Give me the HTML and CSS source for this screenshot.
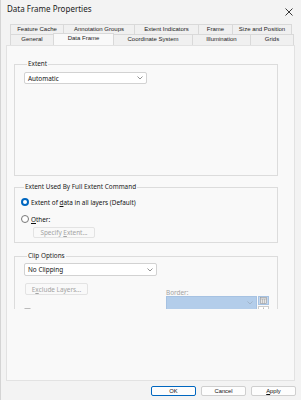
FILE: index.html
```html
<!DOCTYPE html>
<html lang="en">
<head>
  <meta charset="UTF-8" />
  <title>Data Frame Properties</title>
  <link rel="stylesheet" href="styles.css">
</head>
<body>
  <div class="window">
    <div class="titlebar">
      <span class="title">Data Frame Properties</span>
      <span class="close">
        <svg width="8" height="8" viewBox="0 0 8 8"><path d="M0.5 0.5 L7.5 7.5 M7.5 0.5 L0.5 7.5" stroke="#222" stroke-width="0.9" fill="none"/></svg>
      </span>
    </div>

    <div class="tabs">
      <div class="tab-row">
        <div class="tab" style="width:53px">Feature Cache</div>
        <div class="tab" style="width:71px">Annotation Groups</div>
        <div class="tab" style="width:64px">Extent Indicators</div>
        <div class="tab" style="width:34px">Frame</div>
        <div class="tab last" style="width:60px">Size and Position</div>
      </div>
      <div class="tab-row">
        <div class="tab" style="width:43px">General</div>
        <div class="tab active" style="width:61px">Data Frame</div>
        <div class="tab" style="width:79px">Coordinate System</div>
        <div class="tab" style="width:58px">Illumination</div>
        <div class="tab last" style="width:44px">Grids</div>
      </div>
    </div>

    <div class="panel">
      <div class="panel-body">
        <fieldset class="group group-extent">
          <legend>Extent</legend>
          <div class="combo combo-auto">
            <span>Automatic</span>
            <svg class="chev" width="6" height="4" viewBox="0 0 6 4"><path d="M0.5 0.5 L3 3 L5.5 0.5" stroke="#666" stroke-width="0.7" fill="none"/></svg>
          </div>
        </fieldset>

        <fieldset class="group group-full">
          <legend>Extent Used By Full Extent Command</legend>
          <div class="radio-row">
            <span class="radio checked"></span>
            <span>Extent of <u>d</u>ata in all layers (Default)</span>
          </div>
          <div class="radio-row">
            <span class="radio"></span>
            <span><u>O</u>ther:</span>
          </div>
          <div class="btn disabled btn-specify">Specify&nbsp;<u>E</u>xtent...</div>
        </fieldset>

        <fieldset class="group group-clip">
          <legend>Clip Options</legend>
          <div class="combo combo-clip">
            <span>No Clipping</span>
            <svg class="chev" width="6" height="4" viewBox="0 0 6 4"><path d="M0.5 0.5 L3 3 L5.5 0.5" stroke="#666" stroke-width="0.7" fill="none"/></svg>
          </div>
          <div class="clip-row">
            <div class="btn disabled btn-exclude">E<u>x</u>clude Layers...</div>
            <div class="border-field">
              <div class="border-label"><u>B</u>order:</div>
              <div class="border-inputs">
                <div class="combo combo-border">
                  <svg class="chev" width="6" height="4" viewBox="0 0 6 4"><path d="M0.5 0.5 L3 3 L5.5 0.5" stroke="#9ab" stroke-width="0.7" fill="none"/></svg>
                </div>
                <div class="side-btns">
                  <div class="side-btn">
                    <svg width="7" height="7" viewBox="0 0 7 7"><rect x="0.5" y="0.5" width="6" height="6" fill="#e6e6e6" stroke="#999" stroke-width="0.6"/><path d="M0.5 2 H6.5 M2.5 2 V6.5 M4.5 2 V6.5" stroke="#999" stroke-width="0.5"/></svg>
                  </div>
                  <div class="side-btn small">
                    <svg width="5" height="5" viewBox="0 0 5 5"><path d="M2.5 0.5 V4.5 M0.5 2.5 H4.5" stroke="#888" stroke-width="0.6"/></svg>
                  </div>
                </div>
              </div>
            </div>
          </div>
          <div class="check-row">
            <span class="check"></span>
            <span>Clip Grids and Graticules</span>
          </div>
        </fieldset>
      </div>
    </div>

    <div class="footer">
      <div class="btn default">OK</div>
      <div class="btn">Cancel</div>
      <div class="btn"><u>A</u>pply</div>
    </div>
  </div>
</body>
</html>
```

FILE: styles.css
```css
* {
  box-sizing: border-box;
}
body {
  margin: 0;
  background: #f0f0f0;
  font-family: 'Noto Sans', 'Liberation Sans', sans-serif;
  color: #111;
}
.window {
  width: 301px;
  height: 400px;
  border-left: 1px solid #d4d4d4;
  background: #f3f3f3;
  display: flex;
  flex-direction: column;
}
.titlebar {
  height: 24px;
  display: flex;
  align-items: flex-start;
  justify-content: space-between;
  padding: 3px 0 0 6px;
}
.title {
  font-size: 8px;
  line-height: 11px;
  color: #1a1a1a;
}
.close {
  width: 8px;
  height: 8px;
  margin: 5px 8px 0 0;
  display: flex;
}
.tabs {
  padding-left: 9px;
}
.tab-row {
  display: flex;
  height: 10px;
}
.tab-row + .tab-row {
  height: 11px;
}
.tab {
  border: 1px solid #d9d9d9;
  border-right: none;
  border-bottom: none;
  background: #f0f0f0;
  font-family: 'Liberation Sans', sans-serif;
  font-size: 6px;
  line-height: 9px;
  text-align: center;
  white-space: nowrap;
  overflow: hidden;
  color: #222;
}
.tab.last {
  border-right: 1px solid #d9d9d9;
}
.tab.active {
  background: #f9f9f9;
  margin-top: -1px;
  height: 12px;
  line-height: 8px;
  border-right: 1px solid #d9d9d9;
  margin-right: -1px;
  position: relative;
  z-index: 1;
}
.panel {
  margin: 0 6px 0 5px;
  height: 336px;
  background: #f9f9f9;
  border: 1px solid #e2e2e2;
}
.panel-body {
  height: 263px;
  overflow: hidden;
  padding: 14px 0 0 7px;
}
.group {
  margin: 0;
  width: 264px;
  border: 1px solid #dcdcdc;
  padding: 0 0 0 9px;
}
.group legend {
  font-size: 6.4px;
  line-height: 8px;
  padding: 0 1px;
  margin-left: 3px;
  color: #222;
}
.group-extent {
  height: 116px;
}
.group-full {
  margin-top: 7px;
  height: 60px;
  padding-left: 6px;
}
.group-clip {
  margin-top: 9px;
  height: 80px;
}
.combo {
  background: #fff;
  border: 1px solid #d2d2d2;
  border-radius: 2px;
  height: 12px;
  display: flex;
  align-items: center;
  justify-content: space-between;
  padding: 0 3px 0 3px;
  font-size: 6.4px;
  color: #111;
}
.combo-auto {
  width: 123px;
  margin-top: 4px;
}
.combo-clip {
  width: 133px;
  height: 13px;
  margin-top: 3px;
}
.radio-row {
  display: flex;
  align-items: center;
  gap: 2px;
  font-size: 6.4px;
  height: 8px;
  margin-top: 7px;
}
.radio-row + .radio-row {
  margin-top: 9px;
}
.radio {
  width: 8px;
  height: 8px;
  border-radius: 50%;
  border: 1px solid #777;
  background: #fff;
}
.radio.checked {
  border: 2px solid #0067c0;
  background: #fff;
}
.btn {
  border: 1px solid #cfcfcf;
  border-radius: 2px;
  background: #fdfdfd;
  font-family: 'Liberation Sans', sans-serif;
  font-size: 5.8px;
  display: flex;
  align-items: center;
  justify-content: center;
  color: #111;
}
.btn.disabled {
  background: #f9f9f9;
  border-color: #e3e3e3;
  color: #a3a3a3;
  font-family: 'Noto Sans', sans-serif;
  font-size: 6.4px;
}
.btn-specify {
  width: 62px;
  height: 11px;
  margin: 4px 0 0 12px;
}
.clip-row {
  display: flex;
  margin-top: 4px;
}
.btn-exclude {
  width: 63px;
  height: 12px;
  margin-left: 1px;
  margin-top: 3px;
}
.border-field {
  margin-left: 78px;
  margin-top: 9px;
}
.border-label {
  font-size: 6.4px;
  line-height: 7px;
  color: #a3a3a3;
}
.border-inputs {
  display: flex;
  gap: 1px;
}
.combo-border {
  width: 91px;
  height: 14px;
  background: #b3cdea;
  border-color: #a6c2e2;
  border-radius: 0;
  justify-content: flex-end;
}
.side-btns {
  display: flex;
  flex-direction: column;
  gap: 1px;
}
.side-btn {
  width: 11px;
  height: 9px;
  background: #c6d8ee;
  border: 1px solid #a6c2e2;
  display: flex;
  align-items: center;
  justify-content: center;
}
.side-btn.small {
  height: 6px;
  background: #fff;
  border-color: #ccc;
}
.check-row {
  display: flex;
  align-items: center;
  gap: 3px;
  margin-top: -5px;
  font-size: 6.4px;
  color: #a3a3a3;
}
.check {
  width: 7px;
  height: 7px;
  border: 1px solid #bbb;
  border-radius: 1px;
}
.footer {
  display: flex;
  justify-content: flex-end;
  gap: 5px;
  padding: 5px 5px 0 0;
}
.footer .btn {
  width: 45px;
  height: 10px;
}
.footer .btn.default {
  border: 1px solid #0067c0;
}
```
